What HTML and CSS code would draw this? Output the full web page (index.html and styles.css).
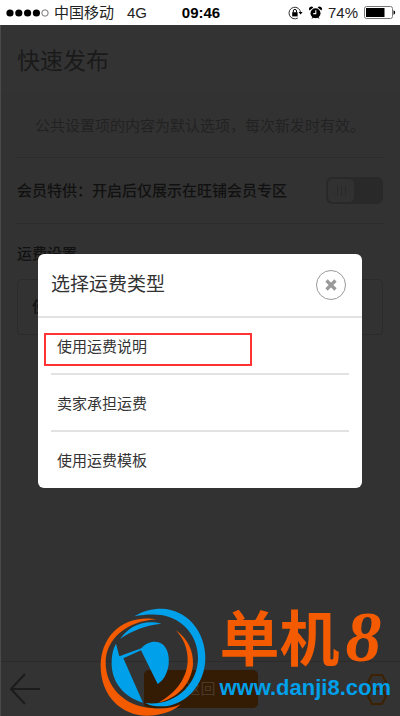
FILE: index.html
```html
<!DOCTYPE html>
<html lang="zh-CN">
<head>
  <meta charset="UTF-8" />
  <meta name="viewport" content="width=device-width, initial-scale=1" />
  <title>快速发布</title>
  <link rel="stylesheet" href="styles.css">
</head>
<body>

  <!-- Status bar -->
  <div class="status">
    <div class="status-left">
      <svg class="signal" width="43" height="8" viewBox="0 0 43 8">
        <circle cx="4" cy="4" r="3.6" /><circle cx="12.8" cy="4" r="3.6" /><circle cx="21.6" cy="4" r="3.6" /><circle cx="30.4" cy="4" r="3.6" />
        <circle cx="39" cy="4" r="3.2" fill="none" stroke="#555" stroke-width=".8" />
      </svg>
      <span>中国移动</span>
      <span class="network">4G</span>
    </div>
    <b>09:46</b>
    <div class="status-right">
      <svg width="15" height="14" viewBox="0 0 15 14">
        <path d="M12.6 6.5A5.8 5.8 0 1 0 9.8 12" fill="none" stroke="#333" stroke-width="1" />
        <path d="M10.6 6h4l-2 2.6z" />
        <rect x="4.2" y="6.2" width="5.4" height="4.2" />
        <path d="M5.3 6.4V5a1.6 1.6 0 0 1 3.2 0v1.4" fill="none" stroke="#000" stroke-width="1" />
      </svg>
      <svg width="13" height="14" viewBox="0 0 13 14">
        <circle cx="6.5" cy="7.3" r="5" />
        <path d="M.6 4.4A2.3 2.3 0 0 1 4.3 1.5zM12.4 4.4A2.3 2.3 0 0 0 8.7 1.5zM2.3 12.8l1.5-2 1.3 1zM10.7 12.8l-1.5-2-1.3 1z" />
        <path d="M6.8 4.2v3.4H4.2" fill="none" stroke="#fff" stroke-width="1.1" />
      </svg>
      <span>74%</span>
      <svg width="32" height="13" viewBox="0 0 32 13">
        <rect x=".5" y=".5" width="28" height="12" rx="2" fill="none" stroke="#777" />
        <rect x="2" y="2" width="18.5" height="9" />
        <path d="M29.5 4.3a2.3 2.3 0 0 1 0 4.4z" />
      </svg>
    </div>
  </div>

  <!-- Page behind the dialog -->
  <div class="page">
    <header class="page-header"><h1>快速发布</h1></header>
    <main>
      <p class="hint">公共设置项的内容为默认选项，每次新发时有效。</p>
      <label class="member">
        <span>会员特供：开启后仅展示在旺铺会员专区</span>
        <input type="checkbox" class="switch">
      </label>
      <h2>运费设置</h2>
      <button class="freight">使用运费说明</button>
    </main>
    <footer>
      <button class="icon-btn" aria-label="后退">
        <svg width="30" height="32" viewBox="0 0 30 32" fill="none" stroke="#1c1c1c" stroke-width="2">
          <path d="M15 1L1 16l14 15M1 16h29" />
        </svg>
      </button>
      <button class="return">返回</button>
      <button class="icon-btn" aria-label="更多">
        <svg width="30" height="32" viewBox="0 0 30 32" fill="none" stroke="#3d2100" stroke-width="2">
          <path d="M11 2h10l4 7-4 7H11l-4-7zM11 16h10l4 7-4 8H11l-4-8zM1 20h6" />
        </svg>
      </button>
    </footer>
  </div>

  <!-- Freight type dialog -->
  <div class="overlay">
    <div class="dialog" role="dialog" aria-labelledby="dialogTitle">
      <div class="dialog-header">
        <h2 id="dialogTitle">选择运费类型</h2>
        <button class="close" aria-label="关闭">
          <svg width="12" height="12" viewBox="0 0 12 12" stroke="#999" stroke-width="3.2">
            <path d="M1.5 1.5l9 9M10.5 1.5l-9 9" />
          </svg>
        </button>
      </div>
      <ul>
        <li><button class="option">使用运费说明</button><span class="marker"></span></li>
        <li><button class="option">卖家承担运费</button></li>
        <li><button class="option">使用运费模板</button></li>
      </ul>
    </div>
  </div>

  <!-- Site logo -->
  <div class="brand">
    <svg width="110" height="110" viewBox="60 30 330 330">
      <g fill="#00a0ea">
        <path d="M163 61C190 44 215 38 245 38C320 40 376 105 376 185C376 270 310 332 245 331C225 331 210 329 196 321C285 332 354 265 354 185C354 115 300 58 230 56C205 55 185 57 163 61Z" />
        <path d="M120 129C147 91 190 69 244 83C200 87 155 104 120 129Z" />
        <path d="M108 143L118 181L184 157C198 141 218 134 236 139C260 146 269 176 266 204C263 230 252 252 233 264L183 163L130 187L189 320C130 303 97 258 95 207C95 180 98 160 108 143Z" />
      </g>
      <g fill="#f45b00">
        <path d="M230 70C130 55 62 120 62 210C62 300 125 359 200 359C245 359 280 346 302 325C275 337 245 340 215 336C130 330 77 270 77 200C77 130 140 75 230 70Z" />
        <path d="M288 103C325 130 340 165 339 205C335 260 295 307 235 320C290 290 321 245 323 195C324 160 312 130 288 103Z" />
      </g>
    </svg>
    <div class="brand-text">
      <strong>单机<i>8</i></strong>
      <a href="#">www.danji8.com</a>
    </div>
  </div>

</body>
</html>
```
FILE: styles.css
```css
* {
  box-sizing: border-box;
}

body {
  margin: 0;
  min-height: 100vh;
  display: flex;
  flex-direction: column;
  position: relative;
  background: #323232;
  color: #111;
  font: 15px/20px "Liberation Sans", "Noto Sans CJK SC", sans-serif;
}

h1, h2, p, ul {
  margin: 0;
  padding: 0;
  font-weight: normal;
}

button {
  font: inherit;
  color: inherit;
  background: none;
  border: none;
  padding: 0;
  cursor: pointer;
}

/* Status bar */
.status {
  display: grid;
  grid-template-columns: 1fr auto 1fr;
  align-items: center;
  height: 25px;
  padding: 0 4px 0 6px;
  background: #fff;
  color: #222;
}

.status b {
  color: #000;
}

.status-left,
.status-right {
  display: flex;
  align-items: center;
  gap: 5px;
}

.status-right {
  justify-content: flex-end;
  gap: 6px;
}

.network {
  margin-left: 8px;
}

/* Page */
.page {
  flex: 1;
  display: flex;
  flex-direction: column;
  border-left: 1px solid #4a4a4a;
}

.page-header {
  height: 69px;
  padding: 20px 16px;
  background: #333;
}

h1 {
  font-size: 23px;
  line-height: 32px;
  color: #1a1a1a;
}

main {
  flex: 1;
  padding: 0 17px 0 16px;
}

.hint {
  height: 64px;
  line-height: 64px;
  border-bottom: 1px solid #2b2b2b;
  text-align: center;
  white-space: nowrap;
  color: #222;
}

.member {
  display: flex;
  align-items: center;
  justify-content: space-between;
  height: 66px;
  border-bottom: 1px solid #2b2b2b;
  font-weight: 500;
}

.switch {
  appearance: none;
  display: flex;
  align-items: center;
  width: 57px;
  height: 27px;
  margin: 0;
  padding: 2px;
  border-radius: 6px;
  background: #292929;
}

.switch::before {
  content: "";
  width: 26px;
  height: 23px;
  border-radius: 5px;
  background: repeating-linear-gradient(90deg, #292929 0 1px, #313131 1px 4px) center / 9px 10px no-repeat #313131;
}

main h2 {
  padding: 20px 0 15px;
  font-size: 15px;
  font-weight: 500;
}

.freight {
  width: 100%;
  height: 56px;
  padding: 0 14px;
  border: 1px solid #2b2b2b;
  border-radius: 5px;
  text-align: left;
  font-weight: 500;
}

footer {
  display: flex;
  align-items: center;
  justify-content: space-between;
  height: 55px;
  padding: 0 9px;
  border-top: 1px solid #2b2b2b;
  background: #333;
}

.icon-btn {
  height: 32px;
}

.return {
  width: 114px;
  height: 38px;
  border-radius: 5px;
  background: #331b04;
  color: #4a3a2a;
}

/* Dialog */
.overlay {
  position: absolute;
  inset: 25px 0 0;
  padding: 229px 38px 0;
}

.dialog {
  border-radius: 6px;
  background: #fff;
  color: #333;
}

.dialog-header {
  display: flex;
  align-items: center;
  justify-content: space-between;
  height: 64px;
  padding: 0 16px 0 13px;
  border-bottom: 2px solid #e2e2e2;
}

.dialog-header h2 {
  font-size: 19px;
  line-height: 24px;
}

.close {
  display: grid;
  place-items: center;
  width: 30px;
  height: 30px;
  border: 1px solid #999;
  border-radius: 50%;
}

.dialog ul {
  padding: 0 13px;
  list-style: none;
}

.dialog li {
  position: relative;
  height: 57px;
  border-bottom: 2px solid #e2e2e2;
}

.dialog li:last-child {
  height: 56px;
  border-bottom: none;
}

.option {
  width: 100%;
  height: 55px;
  padding: 2px 6px 0;
  text-align: left;
}

.marker {
  position: absolute;
  top: 15px;
  left: -7px;
  width: 208px;
  height: 33px;
  border: 2px solid #f33;
  pointer-events: none;
}

/* Logo over the bottom of the page */
.brand {
  position: absolute;
  right: 9px;
  bottom: 0;
  display: flex;
  align-items: flex-start;
  gap: 9px;
}

.brand-text {
  display: flex;
  flex-direction: column;
  gap: 12px;
}

.brand strong {
  font: bold 60px/58px "Noto Sans CJK SC", sans-serif;
  color: #f45b00;
}

.brand i {
  margin-left: 6px;
  font-family: "Liberation Serif", serif;
  font-size: 72px;
  line-height: 48px;
}

.brand a {
  font-size: 22px;
  font-weight: bold;
  line-height: 24px;
  color: #00a0ea;
  text-decoration: none;
}
```
